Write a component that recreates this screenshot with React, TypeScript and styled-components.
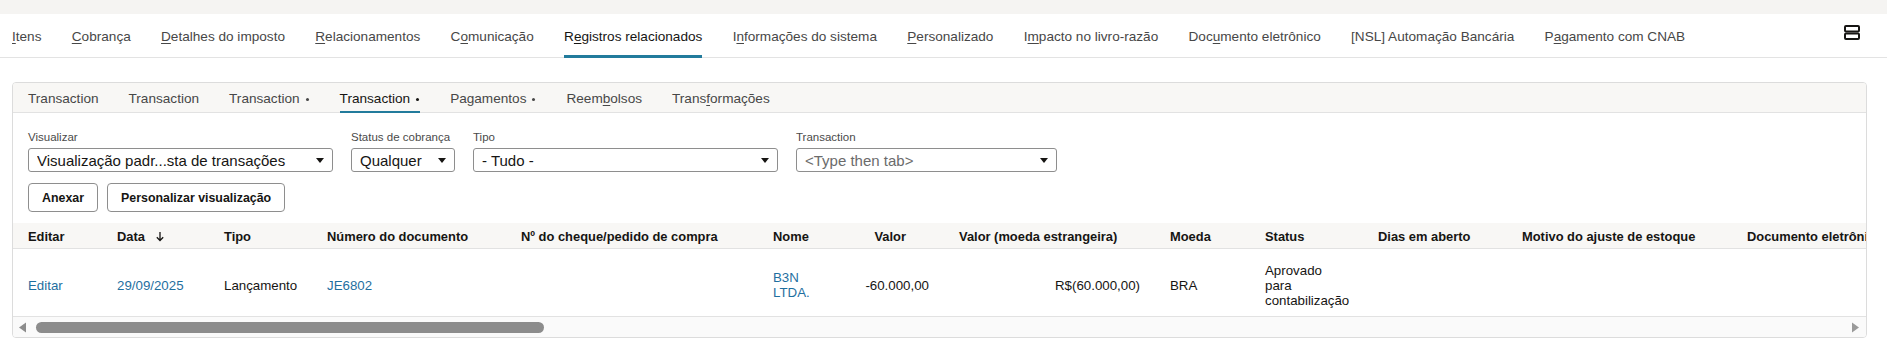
import React from "react";
import styled, { createGlobalStyle } from "styled-components";

const GlobalStyle = createGlobalStyle`
  html, body { margin: 0; padding: 0; background: #ffffff; }
  body {
    font-family: "Liberation Sans", Arial, sans-serif;
    color: #161513;
    -webkit-font-smoothing: antialiased;
  }
  * { box-sizing: border-box; }
`;

const LINK = "#1f6f9f";
const ACCENT = "#227b9c";

const Page = styled.div`
  width: 1887px;
  height: 359px;
  overflow: hidden;
  background: #ffffff;
`;

const TopBand = styled.div`
  height: 14px;
  background: #f5f4f2;
`;

const MainTabBar = styled.nav`
  display: flex;
  align-items: stretch;
  height: 44px;
  padding: 0 27px 0 12px;
  gap: 30.3px;
  border-bottom: 1px solid #e3e3e3;
`;

const MainTab = styled.div<{ $active?: boolean }>`
  display: flex;
  align-items: center;
  padding-top: 3px;
  margin-bottom: -1px;
  font-size: 13.6px;
  white-space: nowrap;
  color: ${(p) => (p.$active ? "#161513" : "#474747")};
  border-bottom: 3px solid ${(p) => (p.$active ? ACCENT : "transparent")};
  u {
    text-decoration-thickness: 1px;
    text-underline-offset: 2px;
  }
`;

const LayoutIcon = styled.div`
  margin-left: auto;
  align-self: center;
  display: flex;
  margin-top: -6px;
`;

const Panel = styled.section`
  margin: 24px 20px 0 12px;
  border: 1px solid #dcdcdc;
  border-radius: 4px;
  overflow: hidden;
  background: #ffffff;
`;

const SubTabBar = styled.div`
  display: flex;
  align-items: stretch;
  height: 30px;
  padding-left: 15px;
  gap: 30px;
  background: #f8f7f5;
  border-bottom: 1px solid #e2e2e2;
`;

const SubTab = styled.div<{ $active?: boolean }>`
  display: flex;
  align-items: center;
  padding-top: 2px;
  margin-bottom: -1px;
  font-size: 13.6px;
  white-space: nowrap;
  color: ${(p) => (p.$active ? "#161513" : "#474747")};
  border-bottom: 2px solid ${(p) => (p.$active ? ACCENT : "transparent")};
  u {
    text-decoration-thickness: 1px;
    text-underline-offset: 2px;
  }
`;

const Dot = styled.span`
  display: inline-block;
  width: 3px;
  height: 3px;
  border-radius: 50%;
  background: currentColor;
  margin-left: 6px;
  margin-right: 1px;
  margin-top: 2px;
`;

const Body = styled.div`
  padding: 17px 0 0 15px;
`;

const FilterRow = styled.div`
  display: flex;
  gap: 18px;
`;

const Field = styled.div<{ $w: number }>`
  display: flex;
  flex-direction: column;
  width: ${(p) => p.$w}px;
`;

const FieldLabel = styled.div`
  font-size: 11.5px;
  line-height: 14px;
  height: 14px;
  color: #4a4a4a;
  white-space: nowrap;
  margin-bottom: 4px;
`;

const Select = styled.div<{ $placeholder?: boolean }>`
  display: flex;
  align-items: center;
  height: 24px;
  border: 1px solid #8e8e8e;
  border-radius: 3px;
  padding: 0 8px 0 8px;
  font-size: 15px;
  color: ${(p) => (p.$placeholder ? "#6b6b6b" : "#161513")};
  white-space: nowrap;
  background: #ffffff;
`;

const SelectText = styled.span`
  flex: 1;
  overflow: hidden;
`;

const Caret = styled.span`
  width: 0;
  height: 0;
  border-left: 4.5px solid transparent;
  border-right: 4.5px solid transparent;
  border-top: 5px solid #161513;
  margin-left: 6px;
`;

const ButtonRow = styled.div`
  display: flex;
  gap: 9px;
  margin-top: 11px;
`;

const Button = styled.button`
  height: 29px;
  padding: 0 13px;
  border: 1px solid #8e8e8e;
  border-radius: 4px;
  background: #ffffff;
  font-family: "Liberation Sans", Arial, sans-serif;
  font-size: 12.4px;
  font-weight: 700;
  color: #161513;
  white-space: nowrap;
`;

const TableWrap = styled.div`
  margin-top: 11px;
  overflow: hidden;
`;

const COLS = "89px 107px 103px 194px 252px 77px 95px 225px 95px 113px 144px 225px 160px";

const HeadRow = styled.div`
  display: grid;
  grid-template-columns: ${COLS};
  width: max-content;
  height: 26px;
  padding-left: 15px;
  align-items: center;
  background: #f8f7f5;
  border-bottom: 1px solid #e2e2e2;
`;

const HeadCell = styled.div<{ $align?: string; $pl?: number; $pr?: number }>`
  display: flex;
  align-items: center;
  justify-content: ${(p) => (p.$align === "right" ? "flex-end" : "flex-start")};
  padding-left: ${(p) => p.$pl ?? 0}px;
  padding-right: ${(p) => p.$pr ?? 0}px;
  font-size: 12.9px;
  font-weight: 700;
  white-space: nowrap;
  color: #161513;
  padding-top: 1px;
`;

const DataRow = styled.div`
  display: grid;
  grid-template-columns: ${COLS};
  width: max-content;
  height: 68px;
  padding-left: 15px;
  padding-top: 5px;
  align-items: center;
  border-bottom: 1px solid #e2e2e2;
`;

const Cell = styled.div<{ $align?: string; $pr?: number; $link?: boolean; $w?: number }>`
  font-size: 13.3px;
  line-height: 15px;
  color: ${(p) => (p.$link ? LINK : "#161513")};
  text-align: ${(p) => p.$align ?? "left"};
  padding-right: ${(p) => p.$pr ?? 0}px;
  ${(p) => (p.$w ? `width: ${p.$w}px;` : "")}
`;

const ScrollTrack = styled.div`
  display: flex;
  align-items: center;
  height: 20px;
  padding: 0 6px 0 5px;
  background: #fafafa;
`;

const Thumb = styled.div`
  width: 508px;
  height: 11px;
  margin-left: 9px;
  border-radius: 6px;
  background: #8c8c8c;
`;

const RightArrow = styled.div`
  margin-left: auto;
  display: flex;
`;

const mainTabs: { label: React.ReactNode; active?: boolean }[] = [
  { label: <><u>I</u>tens</> },
  { label: <><u>C</u>obrança</> },
  { label: <><u>D</u>etalhes do imposto</> },
  { label: <><u>R</u>elacionamentos</> },
  { label: <>C<u>o</u>municação</> },
  { label: <>R<u>e</u>gistros relacionados</>, active: true },
  { label: <>I<u>n</u>formações do sistema</> },
  { label: <><u>P</u>ersonalizado</> },
  { label: <>I<u>m</u>pacto no livro-razão</> },
  { label: <>Doc<u>u</u>mento eletrônico</> },
  { label: <>[NSL] Automação Bancária</> },
  { label: <>P<u>a</u>gamento com CNAB</> },
];

const subTabs: { label: React.ReactNode; dot?: boolean; active?: boolean }[] = [
  { label: "Transaction" },
  { label: "Transaction" },
  { label: "Transaction", dot: true },
  { label: "Transaction", dot: true, active: true },
  { label: "Pagamentos", dot: true },
  { label: <>Reem<u>b</u>olsos</> },
  { label: <>Trans<u>f</u>ormações</> },
];

export default function App() {
  return (
    <Page>
      <GlobalStyle />
      <TopBand />
      <MainTabBar>
        {mainTabs.map((t, i) => (
          <MainTab key={i} $active={t.active}>
            {t.label}
          </MainTab>
        ))}
        <LayoutIcon>
          <svg width="16" height="15" viewBox="0 0 16 15" fill="none">
            <rect x="1" y="1" width="14" height="5.5" rx="1" stroke="#161513" strokeWidth="2" />
            <rect x="1" y="8.5" width="14" height="5.5" rx="1" stroke="#161513" strokeWidth="2" />
          </svg>
        </LayoutIcon>
      </MainTabBar>

      <Panel>
        <SubTabBar>
          {subTabs.map((t, i) => (
            <SubTab key={i} $active={t.active}>
              {t.label}
              {t.dot && <Dot />}
            </SubTab>
          ))}
        </SubTabBar>

        <Body>
          <FilterRow>
            <Field $w={305}>
              <FieldLabel>Visualizar</FieldLabel>
              <Select>
                <SelectText>Visualização padr...sta de transações</SelectText>
                <Caret />
              </Select>
            </Field>
            <Field $w={104}>
              <FieldLabel>Status de cobrança</FieldLabel>
              <Select>
                <SelectText>Qualquer</SelectText>
                <Caret />
              </Select>
            </Field>
            <Field $w={305}>
              <FieldLabel>Tipo</FieldLabel>
              <Select>
                <SelectText>- Tudo -</SelectText>
                <Caret />
              </Select>
            </Field>
            <Field $w={261}>
              <FieldLabel>Transaction</FieldLabel>
              <Select $placeholder>
                <SelectText>&lt;Type then tab&gt;</SelectText>
                <Caret />
              </Select>
            </Field>
          </FilterRow>

          <ButtonRow>
            <Button>Anexar</Button>
            <Button>Personalizar visualização</Button>
          </ButtonRow>
        </Body>

        <TableWrap>
          <HeadRow>
            <HeadCell>Editar</HeadCell>
            <HeadCell>
              Data
              <svg width="10" height="11" viewBox="0 0 10 11" style={{ marginLeft: 10 }} fill="none">
                <path d="M5 1v8.5M1.8 6.3 5 9.5l3.2-3.2" stroke="#161513" strokeWidth="1.3" />
              </svg>
            </HeadCell>
            <HeadCell>Tipo</HeadCell>
            <HeadCell>Número do documento</HeadCell>
            <HeadCell>Nº do cheque/pedido de compra</HeadCell>
            <HeadCell>Nome</HeadCell>
            <HeadCell $align="right" $pr={39}>Valor</HeadCell>
            <HeadCell $pl={14}>Valor (moeda estrangeira)</HeadCell>
            <HeadCell>Moeda</HeadCell>
            <HeadCell>Status</HeadCell>
            <HeadCell>Dias em aberto</HeadCell>
            <HeadCell>Motivo do ajuste de estoque</HeadCell>
            <HeadCell>Documento eletrônico</HeadCell>
          </HeadRow>
          <DataRow>
            <Cell $link>Editar</Cell>
            <Cell $link>29/09/2025</Cell>
            <Cell>Lançamento</Cell>
            <Cell $link>JE6802</Cell>
            <Cell />
            <Cell $link $w={50}>B3N LTDA.</Cell>
            <Cell $align="right" $pr={16}>-60.000,00</Cell>
            <Cell $align="right" $pr={30}>R$(60.000,00)</Cell>
            <Cell>BRA</Cell>
            <Cell $w={84}>Aprovado para contabilização</Cell>
            <Cell />
            <Cell />
            <Cell />
          </DataRow>
          <ScrollTrack>
            <svg width="9" height="11" viewBox="0 0 9 11">
              <path d="M8 0.5v10L1 5.5z" fill="#8c8c8c" />
            </svg>
            <Thumb />
            <RightArrow>
              <svg width="9" height="11" viewBox="0 0 9 11">
                <path d="M1 0.5v10L8 5.5z" fill="#9a9a9a" />
              </svg>
            </RightArrow>
          </ScrollTrack>
        </TableWrap>
      </Panel>
    </Page>
  );
}
